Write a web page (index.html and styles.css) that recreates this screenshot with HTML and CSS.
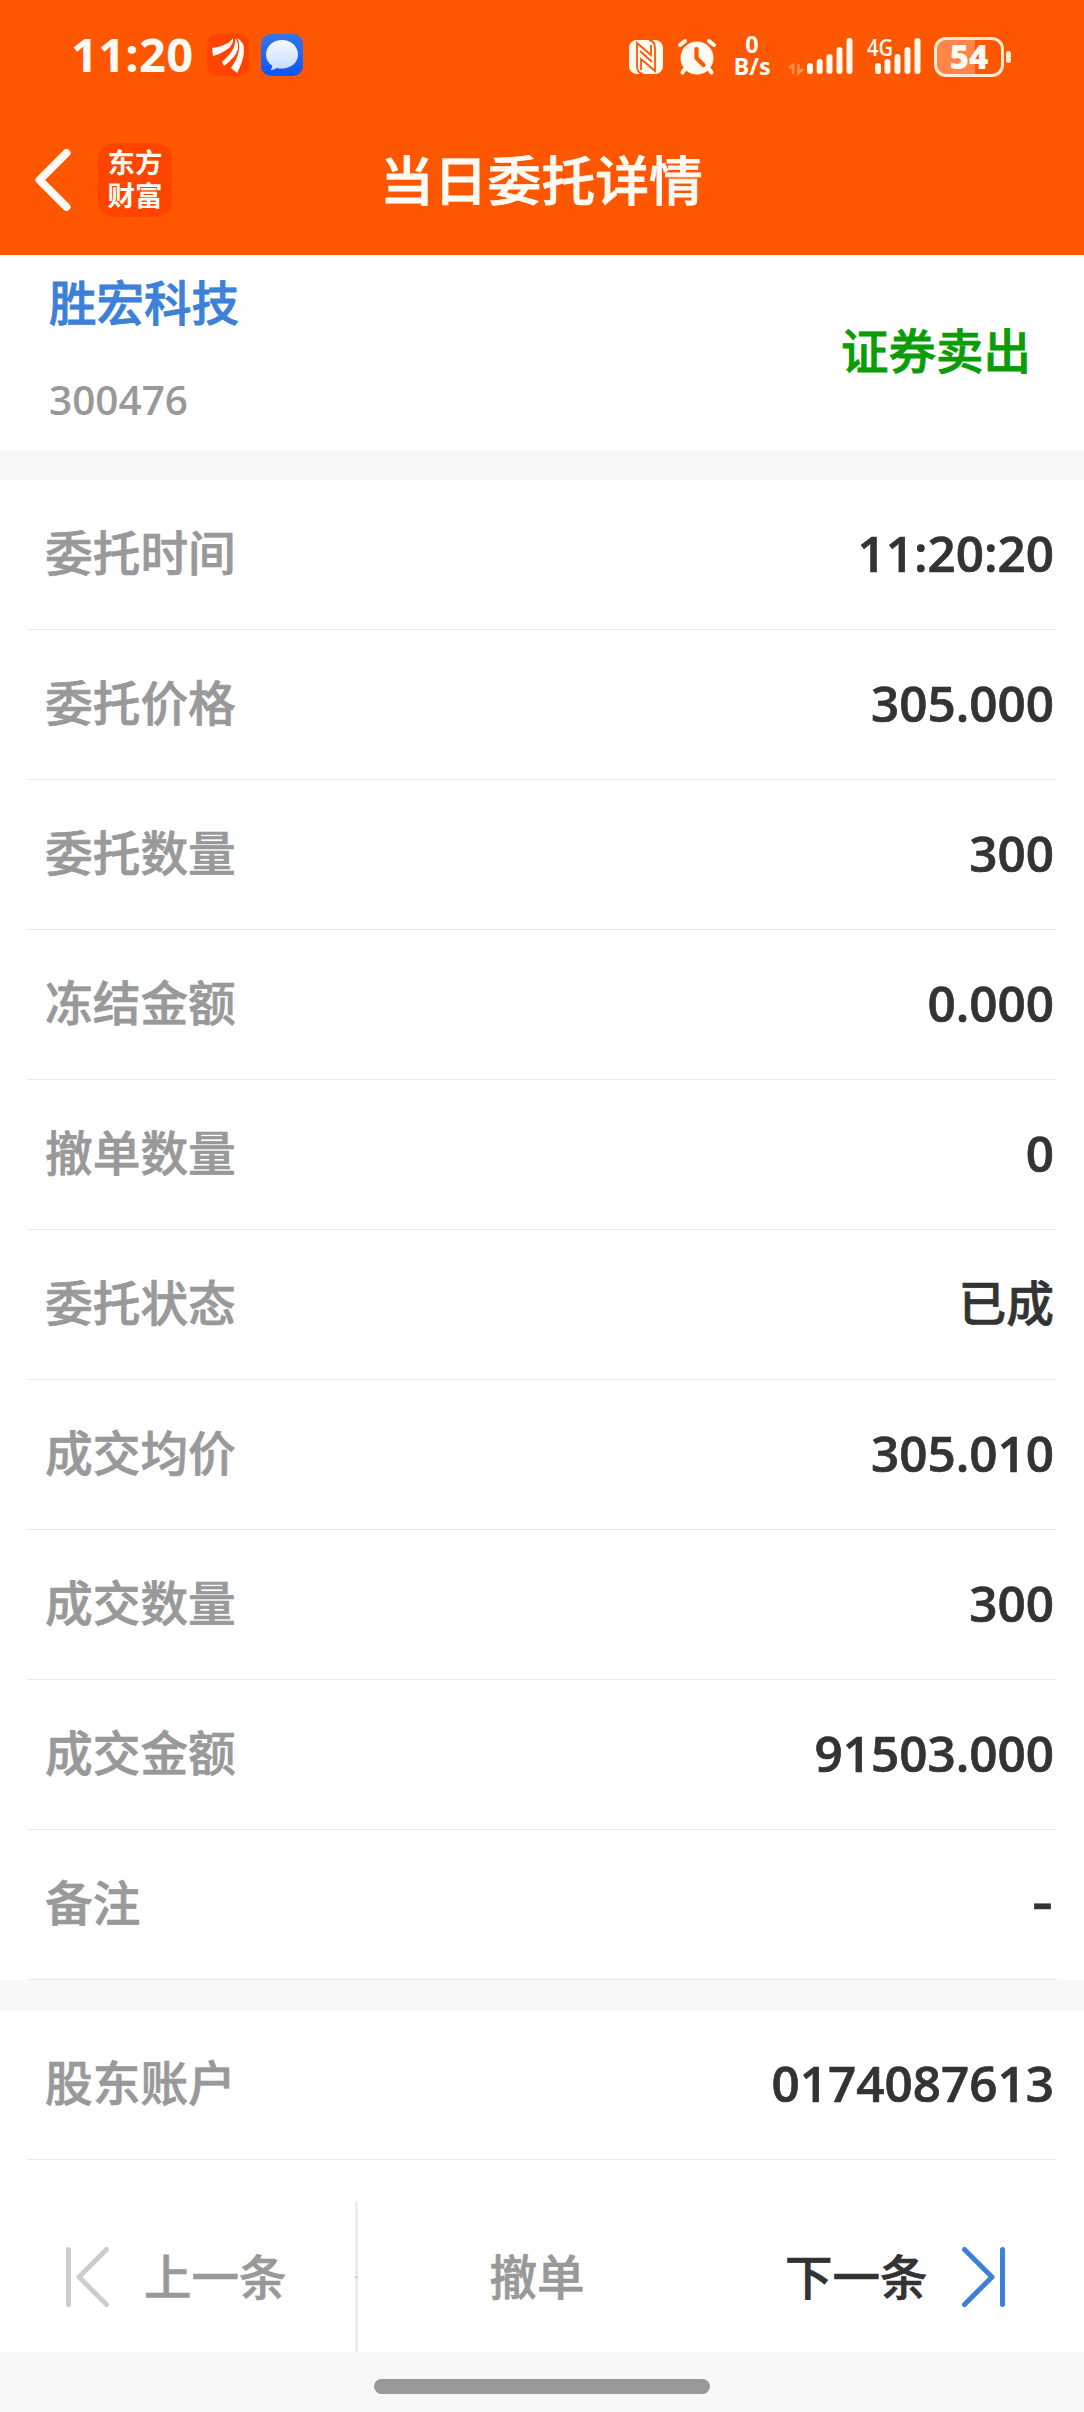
FILE: index.html
```html
<!DOCTYPE html>
<html lang="zh-CN">
<head>
<meta charset="utf-8">
<title>当日委托详情</title>
<link rel="stylesheet" href="styles.css">
</head>
<body>
<header class="header">
  <div class="status">
    <div class="status-left">
      <span class="clock">11:20</span>
      <svg class="app-icon" viewBox="0 0 42 42">
        <rect width="42" height="42" rx="10" fill="#ff4400"/>
        <path fill="#fffaf5" d="M5 14Q14 13 21 9Q25 6 26 4Q27 9 22 14Q16 19 6 22ZM15 28Q24 20 27 13Q29 8 28 4Q32 9 31 15Q29 23 17 32ZM24 34Q31 24 32 16Q33 9 30 4Q38 8 37 18Q36 28 30 39Z"/>
      </svg>
      <svg class="app-icon chat-icon" viewBox="0 0 42 42">
        <defs>
          <linearGradient id="chat" x1="0" y1="0" x2="0" y2="1"><stop offset="0" stop-color="#3377e8"/><stop offset="1" stop-color="#0c55fa"/></linearGradient>
          <linearGradient id="bubble" x1="0" y1="0" x2="0" y2="1"><stop offset="0" stop-color="#f6f9ff"/><stop offset="1" stop-color="#c8dcff"/></linearGradient>
        </defs>
        <rect width="42" height="42" rx="10" fill="url(#chat)"/>
        <path fill="url(#bubble)" d="M21 6C29.500 6 37 12 37 20.500S29.500 34.500 21 34.500Q18 34.500 16 34Q13 36 9.500 36Q11.500 34 11 31.500C7.500 29 5 25.500 5 20.500C5 12 12.500 6 21 6Z"/>
      </svg>
    </div>
    <div class="status-right">
      <svg class="nfc" viewBox="0 0 34 34">
        <rect width="34" height="34" rx="8" fill="#fffaf0"/>
        <path fill="none" stroke="#ff5700" stroke-width="1.800" d="M14 34Q8 33 8 26V3L22 15V5M20 0Q26 1 26 8V31L12 19V30"/>
        <path fill="none" stroke="#ff5700" stroke-width="1.800" d="M11 11L23 22"/>
      </svg>
      <svg class="alarm" viewBox="0 0 38 36">
        <circle cx="19" cy="19" r="16.500" fill="#fffaf0"/>
        <path fill="none" stroke="#fffaf0" stroke-width="4" stroke-linecap="round" d="M2 6L7 2M31 2L36 6M7 30L4.500 33.500M31 30L33.500 33.500"/>
        <path fill="none" stroke="#ff5700" stroke-width="4.200" stroke-linecap="round" stroke-linejoin="round" d="M18.500 10V19L25.500 26"/>
      </svg>
      <div class="speed"><span>0</span><span>B/s</span></div>
      <svg class="signal" viewBox="0 0 64 38">
        <path fill="none" stroke="#ff8f4d" stroke-width="2.600" d="M0 30L4 27V36M9.500 26V35L14 31"/>
        <path fill="none" stroke="#fffaf0" stroke-width="6" stroke-linecap="round" d="M21 28V33M30.700 24V33M40.500 19V33M50.500 12V33M60.500 3V33"/>
      </svg>
      <svg class="signal-4g" viewBox="0 0 54 38">
        <text x="0" y="17.500" class="net" textLength="26" lengthAdjust="spacingAndGlyphs">4G</text>
        <path fill="none" stroke="#fffaf0" stroke-width="6" stroke-linecap="round" d="M11 28V33M20.500 24V33M30.500 19V33M40.500 12V33M50.500 3V33"/>
      </svg>
      <div class="battery"><div class="battery-body">54</div><i class="battery-tip"></i></div>
    </div>
  </div>
  <div class="nav">
    <svg class="back" viewBox="0 0 36 62"><path d="M31.500 4L4.500 31L31.500 58" fill="none" stroke="#fffaf5" stroke-width="8" stroke-linecap="round" stroke-linejoin="round"/></svg>
    <div class="brand"><span>东方</span><span>财富</span></div>
    <h1 class="title">当日委托详情</h1>
  </div>
</header>
<main>
  <section class="stock">
    <div>
      <div class="name">胜宏科技</div>
      <div class="code">300476</div>
    </div>
    <div class="side">证券卖出</div>
  </section>
  <section class="rows">
    <div class="row"><span>委托时间</span><b>11:20:20</b></div>
    <div class="row"><span>委托价格</span><b>305.000</b></div>
    <div class="row"><span>委托数量</span><b>300</b></div>
    <div class="row"><span>冻结金额</span><b>0.000</b></div>
    <div class="row"><span>撤单数量</span><b>0</b></div>
    <div class="row"><span>委托状态</span><b class="state">已成</b></div>
    <div class="row"><span>成交均价</span><b>305.010</b></div>
    <div class="row"><span>成交数量</span><b>300</b></div>
    <div class="row"><span>成交金额</span><b>91503.000</b></div>
    <div class="row"><span>备注</span><b class="empty">-</b></div>
  </section>
  <section class="rows account">
    <div class="row"><span>股东账户</span><b>0174087613</b></div>
  </section>
</main>
<footer class="actions">
  <div class="prev">
    <svg class="arrow" viewBox="0 0 43 60"><path d="M2.500 2.500V57.500M40.500 2.500L13 30L40.500 57.500" fill="none" stroke="#cdcdcd" stroke-width="5" stroke-linecap="round" stroke-linejoin="round"/></svg>
    <span>上一条</span>
  </div>
  <div class="divider"></div>
  <div class="cancel">撤单</div>
  <div class="next">
    <span>下一条</span>
    <svg class="arrow" viewBox="0 0 43 60"><path d="M40.500 2.500V57.500M2.500 2.500L30 30L2.500 57.500" fill="none" stroke="#3d80d8" stroke-width="5" stroke-linecap="round" stroke-linejoin="round"/></svg>
  </div>
</footer>
<div class="home"><i></i></div>
</body>
</html>
```
FILE: styles.css
```css
* { box-sizing: border-box; }
body {
  margin: 0;
  width: 1084px;
  height: 2412px;
  background: #f7f8fa;
  font-family: "Open Sans", "Noto Sans CJK SC", sans-serif;
  font-weight: 500;
  display: flex;
  flex-direction: column;
}
svg { display: block; flex: none; overflow: visible; }
.header { height: 255px; background: #ff5700; color: #fffaf3; }
.status { height: 110px; display: flex; justify-content: space-between; }
.status-left { display: flex; align-items: center; padding-left: 71px; }
.clock { width: 136px; font-size: 47px; font-weight: 700; line-height: 60px; padding-bottom: 2px; letter-spacing: 0.3px; }
.app-icon { width: 42px; height: 42px; }
.chat-icon { margin-left: 12px; }
.status-right { display: flex; align-items: center; padding: 3px 73px 0 0; }
.nfc { width: 34px; height: 34px; }
.alarm { width: 38px; height: 36px; margin-left: 15px; }
.speed {
  width: 38px;
  margin-left: 17px;
  padding-bottom: 3px;
  display: flex;
  flex-direction: column;
  align-items: center;
  font-size: 23.500px;
  line-height: 22px;
  font-weight: 700;
}
.signal { width: 64px; height: 38px; margin-left: 18px; }
.signal-4g { width: 54px; height: 38px; margin-left: 14px; }
.net { font: 600 24px "Open Sans", sans-serif; fill: #fffaf0; }
.battery { display: flex; align-items: center; gap: 2px; margin-left: 13px; }
.battery-body {
  width: 70px;
  height: 40px;
  border: 3px solid #ffe9d2;
  border-radius: 12px;
  background: linear-gradient(90deg, #ff8548 59%, transparent 59%);
  font-size: 33px;
  line-height: 34px;
  font-weight: 800;
  text-align: center;
}
.battery-tip { width: 5px; height: 12px; border-radius: 3px; background: #ffe9d2; }
.nav { height: 140px; display: flex; align-items: center; padding-left: 35px; }
.back { width: 36px; height: 62px; }
.brand {
  width: 74px;
  height: 74px;
  margin-left: 27px;
  padding-top: 2px;
  border-radius: 16px;
  background: #ff4400;
  display: flex;
  flex-direction: column;
  align-items: center;
  font: 700 27.500px/33px "Noto Sans CJK SC", sans-serif;
}
.title {
  margin: 0 0 0 208px;
  font-size: 53.800px;
  line-height: 80px;
  font-weight: 500;
  -webkit-text-stroke: 0.8px;
}
.stock {
  height: 195px;
  background: #fff;
  display: flex;
  justify-content: space-between;
  padding: 18px 53px 0 49px;
}
.name { font-size: 47.500px; line-height: 60px; color: #3d80d8; -webkit-text-stroke: 0.8px; }
.code { margin-top: 37px; font-size: 40.500px; line-height: 60px; font-weight: 650; color: #999; }
.side { margin-top: 48px; font-size: 47.500px; line-height: 60px; color: #0b9c08; -webkit-text-stroke: 0.8px; }
.rows { margin-top: 30px; background: #fff; padding: 0 27px; }
.row {
  height: 150px;
  border-bottom: 1px solid #e9e9e9;
  display: flex;
  align-items: center;
  justify-content: space-between;
  padding: 0 3px 3px 18px;
  font-size: 47.700px;
  line-height: 70px;
  color: #999;
  -webkit-text-stroke: 0.7px;
}
.row b { font-size: 49.400px; font-weight: 600; color: #333; }
.row .state { font-size: 47.700px; font-weight: 500; }
.row .empty { font-family: Inter, sans-serif; }
.actions {
  height: 192px;
  padding-top: 42px;
  background: #fff;
  display: flex;
  font-size: 47.500px;
  line-height: 70px;
  color: #999;
  -webkit-text-stroke: 0.7px;
}
.prev, .cancel, .next { display: flex; align-items: center; padding-bottom: 1px; }
.prev { width: 355px; padding-left: 66px; gap: 35px; }
.divider { width: 3px; background: linear-gradient(#ededed 74px, #cfcfcf 74px 76px, #ededed 76px); }
.cancel { width: 358px; justify-content: center; }
.next { width: 368px; padding-left: 69px; gap: 34px; color: #333; }
.arrow { width: 43px; height: 60px; }
.home { flex: 1; display: flex; justify-content: center; padding-top: 27px; }
.home i { width: 336px; height: 15px; border-radius: 8px; background: #999; }
```
